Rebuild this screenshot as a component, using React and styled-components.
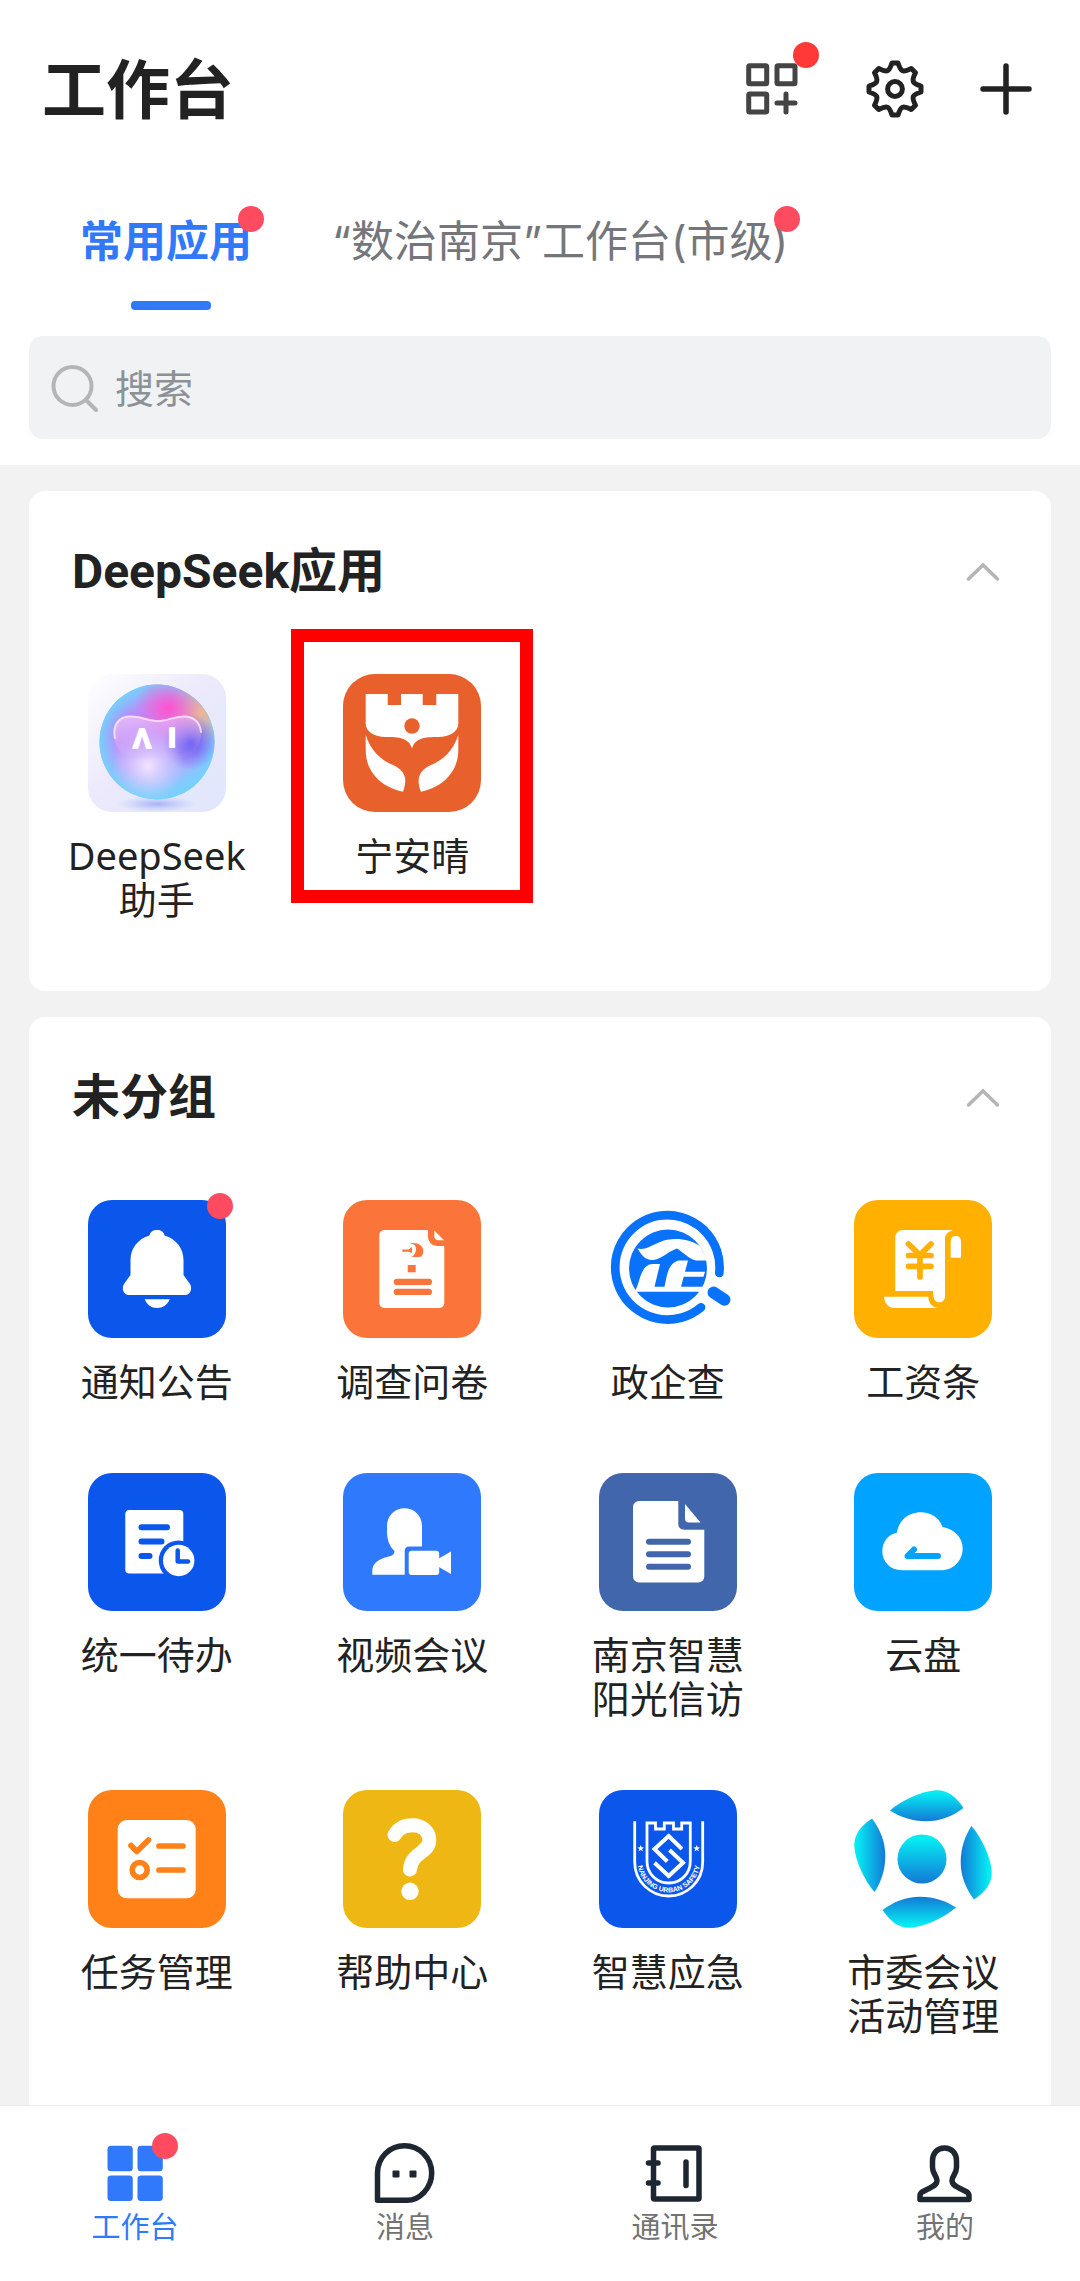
import React from 'react'
import styled, { createGlobalStyle, css } from 'styled-components';


const BellIcon = () => (
  <svg viewBox="0 0 138 138" fill="#fff" aria-hidden="true">
    <path d="M69 30C73 30 76 32 76.500 35.500C88 39 95.500 48 95.500 60V75L102 84C104.500 88 103 95 97 95H41C35 95 33.500 88 36 84L42.500 75V60C42.500 48 50 39 61.500 35.500C62 32 65 30 69 30Z" />
    <path d="M56.700 99.300H81.700C79.500 105 74.500 108 69 108S59 105 56.700 99.300Z" />
  </svg>
);

const SurveyIcon = () => (
  <svg viewBox="0 0 138 138" fill="#fff" aria-hidden="true">
    <path d="M41 30H85V36C85 42 89 46 95 46H101.300V103A5 5 0 0 1 96.300 108H41.300A5 5 0 0 1 36.300 103V35A5 5 0 0 1 41 30Z" />
    <path d="M91.300 30.500L101 40.300H95.500C92.500 40.300 91.300 38.500 91.300 36Z" />
    <g fill="#fb753a">
      <path d="M66 43.500C74 41.500 80.300 45.500 80.300 51C80.300 53.500 79 57 76.500 57H68.500C73 54.500 74.500 48 71.500 45C70 44 68 43.700 66 43.500Z" />
      <path d="M59.300 49.500H65.500L69 47V53L66 51.700H59.300Z" />
      <rect x="64.700" y="65" width="8" height="7.300" />
      <rect x="50.700" y="78.700" width="38.300" height="6.300" rx="3.100" />
      <rect x="50.700" y="88.700" width="38.300" height="6.300" rx="3.100" />
    </g>
  </svg>
);

const CompanyIcon = () => (
  <svg viewBox="0 0 138 138" fill="none" aria-hidden="true">
    <path d="M120.300 73A52.200 52.200 0 1 0 102 107.300" stroke="#0872fb" strokeWidth="8.700" strokeLinecap="round" />
    <path d="M114.500 92.500L125.500 99.700" stroke="#0872fb" strokeWidth="12" strokeLinecap="round" />
    <circle cx="69" cy="68.500" r="39" fill="#0872fb" />
    <g fill="#fff">
      <path d="M38.500 48.500C47 51 56 42.500 68 39.700C80 37.500 92 40 101 46L109 60.500H97C90 59 84 52 78 48.500C70 51 62 59.500 54 60C47 60.500 43 56 38.500 48.500Z" />
      <path d="M36 91C41 84 41 64 54 64H61L55.500 86.700H65.500C68 78 68 63 80 60.500H89L86 71.700H106L104.500 76.700H84.700L82 86.700H104L101 91.700H36Z" />
    </g>
  </svg>
);

const SalaryIcon = () => (
  <svg viewBox="0 0 138 138" fill="#fff" aria-hidden="true">
    <path d="M49.500 30H99C94 31.500 91 34.500 91 39V96C91 100 88.700 102.300 85.500 102.300C82 102.300 80 100 79.500 96L79 91H41.300V38C41.300 33 44.500 30 49.500 30Z" />
    <path d="M96.700 57.700V41.500C96.700 38 98.500 36 101.800 36S107 38 107 41.500V57.700Z" />
    <path d="M30 96.700H74.300C74.500 102 77 106.500 83.500 108H40C34 107.500 30.500 103 30 96.700Z" />
    <g fill="none" stroke="#ffb000" strokeWidth="5.700" strokeLinecap="round" strokeLinejoin="round">
      <path d="M54.500 44L66 55L77 44" />
      <path d="M54.500 55.500H77M54.500 66.300H77M66 55V77" />
    </g>
  </svg>
);

const TodoIcon = () => (
  <svg viewBox="0 0 138 138" fill="#fff" aria-hidden="true">
    <rect x="37.300" y="37" width="58" height="63.500" rx="4" />
    <g stroke="#0b57ec" strokeWidth="6" strokeLinecap="round" fill="none">
      <path d="M53.500 54.300H79M53.500 68.500H73.500M53.500 83H61.500" />
    </g>
    <circle cx="90.700" cy="87.500" r="20" fill="#0b57ec" />
    <circle cx="90.700" cy="87.500" r="15.700" />
    <path d="M89.700 77.500V88.500H100" fill="none" stroke="#0b57ec" strokeWidth="4.500" strokeLinecap="round" strokeLinejoin="round" />
  </svg>
);

const MeetingIcon = () => (
  <svg viewBox="0 0 138 138" fill="#fff" aria-hidden="true">
    <path d="M61.500 35.300C71 35.300 79 42.500 79 53V73.500H66C63.500 73.500 61.700 75 61.700 78V101.700H29.300V98C29.300 90 36 86 44 84C48 83 51.500 82 51.500 78C46 73 44 66 44 58V53C44 42.500 52 35.300 61.500 35.300Z" />
    <rect x="65.700" y="77.700" width="30.500" height="24.300" rx="3" />
    <path d="M95 86L108 78.500V101L95 93.500Z" />
  </svg>
);

const DocIcon = () => (
  <svg viewBox="0 0 138 138" fill="#fff" aria-hidden="true">
    <path d="M40 28H79.300V50.500C79.300 54.500 81.500 56.700 85.500 56.700H105.300V103.500A6 6 0 0 1 99.300 109.500H40A6 6 0 0 1 34 103.500V34A6 6 0 0 1 40 28Z" />
    <path d="M86 31L101.500 49.500H90Q86 49.500 86 45.500Z" />
    <path d="M50 68.700H89M50 81.300H89M50 93.800H89" stroke="#4166ab" strokeWidth="6" strokeLinecap="round" />
  </svg>
);

const CloudIcon = () => (
  <svg viewBox="0 0 138 138" fill="#fff" aria-hidden="true">
    <path d="M48 97.300C36 97.300 28.300 88.500 28.300 78.300C28.300 68 35 61 43 59.700C44.500 48 54 39.300 66.700 39.300C77 39.300 85.500 45 88.500 54C100 56 108.700 64 108.700 75.500C108.700 88 99 97.300 87 97.300Z" />
    <path d="M84 83H53.500L60 76.500" fill="none" stroke="#00a3ff" strokeWidth="6" strokeLinecap="round" strokeLinejoin="round" />
  </svg>
);

const TaskIcon = () => (
  <svg viewBox="0 0 138 138" fill="none" aria-hidden="true">
    <rect x="29.700" y="30" width="78" height="78.300" rx="9" fill="#fff" />
    <g stroke="#ff8118" strokeWidth="5.700" strokeLinecap="round" strokeLinejoin="round">
      <path d="M43 55.500L48.700 61.500L60.500 50" />
      <path d="M71 56H95M71 80H95" />
      <circle cx="51.700" cy="80" r="7.500" />
    </g>
  </svg>
);

const HelpIcon = () => (
  <svg viewBox="0 0 138 138" fill="none" aria-hidden="true">
    <path d="M51.500 45C55.500 38 62 35.300 69.500 35.300C79 35.300 86.300 41 86.300 50C86.300 63 68.500 62 67 79.500" stroke="#fff" strokeWidth="14" strokeLinecap="round" />
    <circle cx="67" cy="101.300" r="8.700" fill="#fff" />
  </svg>
);

const STAR = 'M0 -3.500L.9 -1.200L3.300 -1.100L1.400 .4L2.100 2.800L0 1.500L-2.100 2.800L-1.400 .4L-3.300 -1.100L-.9 -1.200Z';

const SafetyIcon = () => (
  <svg viewBox="0 0 138 138" fill="none" stroke="#fff" aria-hidden="true">
    <path d="M35.700 31.300V72C35.700 91 51 106 69.700 106S103.700 91 103.700 72V31.300" strokeWidth="2.800" />
    <path d="M48 33H56.500V39H65.300V33H74.500V39H82.700V33H91.300V71.500C91.300 83.500 82 93 69.700 93S48 83.500 48 71.500Z" strokeWidth="2.800" />
    <path d="M83 59L69.700 46L55.500 59L68.300 71.500M70.500 60L84 72.700L69.700 86L55.500 72.700" strokeWidth="4" />
    <g fill="#fff" stroke="none">
      <path d={STAR} transform="translate(41.700 58.500)" />
      <path d={STAR} transform="translate(97.700 58.500)" />
      <path id="badge-arc" d="M38.500 64V71.500C38.500 88.500 52.500 102.300 69.700 102.300S101 88.500 101 71.500V64" fill="none" />
      <text fontSize="7" fontWeight="700" fontFamily="'Liberation Sans', sans-serif">
        <textPath href="#badge-arc" startOffset="50%" textAnchor="middle">NANJING URBAN SAFETY</textPath>
      </text>
    </g>
  </svg>
);

const PETAL = 'M36 20.500C48 10 68 1 82 .3C94 0 102 7 109.500 18C98 26.500 86 31.300 72 31.300C58 31.300 46 27 36 20.500Z';

const PetalIcon = () => (
  <svg viewBox="0 0 138 138" aria-hidden="true">
    <defs>
      <linearGradient id="petal" x1="0" y1="0" x2="0" y2="1">
        <stop offset="0.100" stopColor="#05eaf3" />
        <stop offset="1" stopColor="#1479d6" />
      </linearGradient>
    </defs>
    <g fill="url(#petal)">
      {[0, 90, 180, 270].map((angle) => (
        <path key={angle} d={PETAL} transform={`rotate(${angle} 69 69)`} />
      ))}
      <circle cx="68" cy="69" r="24.500" />
    </g>
  </svg>
);

const RobotIcon = () => (
  <svg viewBox="0 0 138 138" aria-hidden="true">
    <defs>
      <linearGradient id="robot-back" x1="0" y1="0" x2="1" y2="1">
        <stop offset="0" stopColor="#fff" />
        <stop offset="0.450" stopColor="#eceafb" />
        <stop offset="1" stopColor="#dfe6fc" />
      </linearGradient>
      <linearGradient id="robot-ball" x1="0.250" y1="0" x2="0.500" y2="1">
        <stop offset="0" stopColor="#9fb2fb" />
        <stop offset="0.300" stopColor="#b58bfa" />
        <stop offset="0.650" stopColor="#b9a4fb" />
        <stop offset="1" stopColor="#7fd6fd" />
      </linearGradient>
      <radialGradient id="robot-edge">
        <stop offset="0.680" stopColor="#76c8fd" stopOpacity="0" />
        <stop offset="1" stopColor="#74d2fd" />
      </radialGradient>
      <radialGradient id="robot-pink">
        <stop offset="0" stopColor="#ff52cf" />
        <stop offset="1" stopColor="#ff62d0" stopOpacity="0" />
      </radialGradient>
      <radialGradient id="robot-gold">
        <stop offset="0" stopColor="#f2b58f" />
        <stop offset="1" stopColor="#f2b58f" stopOpacity="0" />
      </radialGradient>
      <radialGradient id="robot-violet">
        <stop offset="0" stopColor="#5a4ef0" />
        <stop offset="1" stopColor="#6a55f0" stopOpacity="0" />
      </radialGradient>
      <radialGradient id="robot-glow">
        <stop offset="0" stopColor="#f3e4ff" />
        <stop offset="1" stopColor="#e0ccff" stopOpacity="0" />
      </radialGradient>
      <radialGradient id="robot-shade">
        <stop offset="0" stopColor="#a9b0f8" />
        <stop offset="1" stopColor="#b9c4fa" stopOpacity="0" />
      </radialGradient>
      <linearGradient id="robot-visor" x1="0" y1="0" x2="0.500" y2="1">
        <stop offset="0" stopColor="#f0c4fa" stopOpacity="0.850" />
        <stop offset="0.600" stopColor="#dcaaf6" stopOpacity="0.500" />
        <stop offset="1" stopColor="#c9b0fa" stopOpacity="0.100" />
      </linearGradient>
      <clipPath id="robot-clip">
        <circle cx="69" cy="68" r="57.500" />
      </clipPath>
    </defs>
    <rect width="138" height="138" rx="24" fill="url(#robot-back)" />
    <ellipse cx="69" cy="130" rx="40" ry="8" fill="url(#robot-shade)" />
    <g clipPath="url(#robot-clip)">
      <rect x="10" y="10" width="118" height="118" fill="url(#robot-ball)" />
      <circle cx="69" cy="68" r="58" fill="url(#robot-edge)" />
      <circle cx="112" cy="38" r="34" fill="url(#robot-gold)" />
      <circle cx="80" cy="34" r="34" fill="url(#robot-pink)" />
      <circle cx="102" cy="68" r="28" fill="url(#robot-violet)" />
      <circle cx="60" cy="92" r="36" fill="url(#robot-glow)" />
    </g>
    <path d="M41 42.500C54 42 60 47 70 47S86 42 98 42.500C108 43.500 113 50 113 59C113 75 103 84 90 84H48C34 83 26 74 26 60C26 50 31 43 41 42.500Z" fill="url(#robot-visor)" />
    <path d="M27 64C24 51 31 43 41 42.500C54 42 60 47 70 47S86 42 98 42.500C106 43.500 112 48 113 58" fill="none" stroke="#ffe3fb" strokeWidth="2" strokeLinecap="round" opacity="0.850" />
    <g fill="#fff" stroke="#fff" strokeWidth="2" strokeLinejoin="round" fontFamily="'Liberation Sans', sans-serif" fontWeight="700" fontSize="27" textAnchor="middle">
      <text x="54" y="74">Λ</text>
      <text x="84" y="73">I</text>
    </g>
  </svg>
);

const SunnyIcon = () => (
  <svg viewBox="0 0 138 138" fill="#fff" aria-hidden="true">
    <path d="M22.700 20H44.700V31H58V20H79.700V31H93.300V20H115.300V50C115.300 57 107 63 95 63C82 63 72 64 69 74.500C66 64 56 63 43 63C31 63 22.700 57 22.700 50Z" />
    <circle cx="69" cy="52" r="7.700" fill="#e8602c" />
    <path d="M22.700 61C28 77 38 86 50 91C61 96 65.500 104 60 117.700C38 113 22.700 98 22.700 76Z" />
    <path d="M115.300 61C110 77 100 86 88 91C77 96 72.500 104 78 117.700C100 113 115.300 98 115.300 76Z" />
  </svg>
);

const AddAppIcon = () => (
  <svg width="52" height="52" viewBox="0 0 52 52" fill="none" stroke="#444" strokeWidth="5" strokeLinecap="round" aria-hidden="true">
    <rect x="2.700" y="2.700" width="18" height="18" rx="1" />
    <rect x="31" y="2.700" width="18" height="18" rx="1" />
    <rect x="2.700" y="31" width="18" height="18" rx="1" />
    <path d="M40 31V49M31 40H49" />
  </svg>
);

const gearPath = () => {
  const turn = (x, y, step) => {
    const a = (step * Math.PI) / 4;
    return `${(x * Math.cos(a) - y * Math.sin(a)).toFixed(2)} ${(x * Math.sin(a) + y * Math.cos(a)).toFixed(2)}`;
  };
  let d = `M${turn(-3, -26, 0)}`;
  for (let i = 0; i < 8; i += 1) {
    d += `L${turn(3, -26, i)}C${turn(6, -17, i)} ${turn(-6, -17, i + 1)} ${turn(-3, -26, i + 1)}`;
  }
  return `${d}Z`;
};

const GearIcon = () => (
  <svg width="58" height="58" viewBox="-29 -29 58 58" fill="none" stroke="#222" strokeWidth="5" strokeLinejoin="round" aria-hidden="true">
    <path d={gearPath()} />
    <circle r="7.400" />
  </svg>
);

const PlusIcon = () => (
  <svg width="52" height="52" viewBox="0 0 52 52" stroke="#222" strokeWidth="5.500" strokeLinecap="round" aria-hidden="true">
    <path d="M26 3V49M3 26H49" />
  </svg>
);

const SearchIcon = () => (
  <svg width="48" height="48" viewBox="0 0 48 48" fill="none" stroke="#b4b5b7" strokeWidth="4" strokeLinecap="round" aria-hidden="true">
    <circle cx="21.500" cy="22" r="19" />
    <path d="M35.500 36.500L45 46" />
  </svg>
);

const ChevronUp = () => (
  <svg width="34" height="20" viewBox="0 0 34 20" fill="none" stroke="#b5b5b5" strokeWidth="3.500" strokeLinecap="round" aria-hidden="true">
    <path d="M2.500 17L17 3L31.500 17" />
  </svg>
);

const WorkbenchIcon = () => (
  <svg width="64" height="64" viewBox="0 0 64 64" fill="#3079fb" aria-hidden="true">
    <rect x="4.500" y="3.700" width="25.300" height="25.500" rx="3.500" />
    <rect x="34.500" y="3.700" width="25.300" height="25.500" rx="3.500" />
    <rect x="4.500" y="33.500" width="25.300" height="25.500" rx="3.500" />
    <rect x="34.500" y="33.500" width="25.300" height="25.500" rx="3.500" />
  </svg>
);

const ChatIcon = () => (
  <svg width="64" height="64" viewBox="0 0 64 64" fill="none" stroke="#1d2631" strokeWidth="5.500" strokeLinejoin="round" aria-hidden="true">
    <path d="M4.500 58.300V31C4.500 15.500 16.500 3.800 31.500 3.800S58.700 16 58.700 31S46.500 58.300 34 58.300Z" />
    <g fill="#1d2631" stroke="none">
      <rect x="19.500" y="28.500" width="7" height="7" rx="1" />
      <rect x="36.500" y="28.500" width="7" height="7" rx="1" />
    </g>
  </svg>
);

const ContactsIcon = () => (
  <svg width="64" height="64" viewBox="0 0 64 64" fill="none" stroke="#1d2631" strokeWidth="5.500" strokeLinejoin="round" strokeLinecap="round" aria-hidden="true">
    <rect x="10.500" y="6" width="45.500" height="51" rx="1" />
    <path d="M5.500 21H15M5.500 41H15" />
    <path d="M43 20V43.500" />
  </svg>
);

const PersonIcon = () => (
  <svg width="64" height="64" viewBox="0 0 64 64" fill="none" stroke="#1d2631" strokeWidth="5.500" strokeLinejoin="round" aria-hidden="true">
    <path d="M31.500 6C24 6 19.500 11.500 19.500 19V25.500C19.500 32 24 34 24 38.500C24 42.500 20.500 44 17 46L9 50C7.500 51 7 52.500 7 54V57.500H56V54C56 52.500 55.500 51 54 50L46 46C42.500 44 39 42.500 39 38.500C39 34 43.500 32 43.500 25.500V19C43.500 11.500 39 6 31.500 6Z" />
  </svg>
);

const deepSeekApps = [
  { name: 'DeepSeek助手', icon: RobotIcon },
  { name: '宁安晴', icon: SunnyIcon, color: '#e8602c', round: true, marked: true },
];

const otherApps = [
  { name: '通知公告', icon: BellIcon, color: '#0b57ec', unread: true },
  { name: '调查问卷', icon: SurveyIcon, color: '#fb753a' },
  { name: '政企查', icon: CompanyIcon },
  { name: '工资条', icon: SalaryIcon, color: '#ffb000' },
  { name: '统一待办', icon: TodoIcon, color: '#0b57ec' },
  { name: '视频会议', icon: MeetingIcon, color: '#2f79fc' },
  { name: '南京智慧阳光信访', icon: DocIcon, color: '#4166ab' },
  { name: '云盘', icon: CloudIcon, color: '#00a3ff' },
  { name: '任务管理', icon: TaskIcon, color: '#ff8118' },
  { name: '帮助中心', icon: HelpIcon, color: '#efb714' },
  { name: '智慧应急', icon: SafetyIcon, color: '#0b57ec' },
  { name: '市委会议活动管理', icon: PetalIcon },
];

const navItems = [
  { name: '工作台', icon: WorkbenchIcon, active: true, unread: true },
  { name: '消息', icon: ChatIcon },
  { name: '通讯录', icon: ContactsIcon },
  { name: '我的', icon: PersonIcon },
];

const AppGroup = ({ title, apps }) => (
  <Card>
    <CardHeader>
      <h2>{title}</h2>
      <IconButton type="button" aria-label={`收起${title}`}>
        <ChevronUp/>
      </IconButton>
    </CardHeader>

    <AppGrid>
      {apps.map(({ name, icon: Icon, color, round, unread, marked }) => (
        <AppItem key={name}>
          <AppLink href="#" $marked={marked}>
            <AppIcon $color={color} $round={round}>
              <Icon/>
              {unread && <Dot $place="app"/>}
            </AppIcon>
            <AppName>{name}</AppName>
          </AppLink>
        </AppItem>
      ))}
    </AppGrid>
  </Card>
);

const App = () => {
  return (
    <>
      <GlobalStyle/>
      <Screen>
        <Header>
          <TitleBar>
            <h1>工作台</h1>
            <Actions>
              <IconButton type="button" aria-label="添加应用">
                <AddAppIcon/>
                <Dot $place="action"/>
              </IconButton>
              <IconButton type="button" aria-label="设置">
                <GearIcon/>
              </IconButton>
              <IconButton type="button" aria-label="新建">
                <PlusIcon/>
              </IconButton>
            </Actions>
          </TitleBar>

          <Tabs role="tablist">
            <Tab type="button" role="tab" aria-selected="true" $active>
              常用应用
              <Dot $place="tab"/>
            </Tab>
            <Tab type="button" role="tab" aria-selected="false">
              “数治南京”工作台(市级)
              <Dot $place="tab"/>
            </Tab>
          </Tabs>

          <SearchBox>
            <SearchIcon/>
            <input type="text" placeholder="搜索" aria-label="搜索" />
          </SearchBox>
        </Header>

        <Content>
          <AppGroup title="DeepSeek应用" apps={deepSeekApps} />
          <AppGroup title="未分组" apps={otherApps} />
        </Content>

        <BottomNav>
          {navItems.map(({ name, icon: Icon, active, unread }) => (
            <NavLink key={name} href="#" $active={active}>
              <NavIcon>
                <Icon/>
                {unread && <Dot $place="nav"/>}
              </NavIcon>
              {name}
            </NavLink>
          ))}
        </BottomNav>
      </Screen>
    </>
  );
};

export default App;

const GlobalStyle = createGlobalStyle`
  *, *::before, *::after{
    box-sizing: border-box;
  }

  body{
    margin: 0;

    font-family: 'Noto Sans', 'Noto Sans CJK SC', sans-serif;
    color: #222;
    background-color: #fff;
  }

  h1, h2, ul{
    margin: 0;
    padding: 0;
  }

  button, input{
    font-family: inherit;
  }

  svg{
    display: block;
  }
`
const Screen = styled.div`
  height: 100vh;

  display: flex;
  flex-direction: column;
`
const Header = styled.header`
  flex: none;

  background-color: #fff;
`
const TitleBar = styled.div`
  height: 178px;
  padding: 0 48px 0 42px;

  display: flex;
  justify-content: space-between;
  align-items: center;

  h1{
    font-size: 64px;
    font-weight: 700;
    line-height: 80px;
  }
`
const IconButton = styled.button`
  padding: 0;

  position: relative;

  border: none;
  background: none;
`
const Actions = styled.div`
  display: flex;
  align-items: center;
  gap: 56px;

  ${IconButton}:first-child{
    margin-right: 12px;
  }
`
const dotPlaces = {
  action: css`
    top: -21px;
    right: -21px;
  `,
  tab: css`
    top: -4px;
    right: -12px;
  `,
  app: css`
    top: -7px;
    right: -7px;
  `,
  nav: css`
    top: -9px;
    right: -11px;
  `,
};
const Dot = styled.span`
  width: 26px;
  height: 26px;

  position: absolute;
  ${({ $place }) => dotPlaces[$place]}

  border-radius: 50%;
  background-color: ${({ $place }) => ($place === 'action' ? '#ff3838' : '#ff4b60')};
`
const Tabs = styled.div`
  padding: 32px 80px 0;

  display: flex;
  gap: 80px;
`
const Tab = styled.button`
  padding: 0;

  position: relative;

  font-family: Inter, 'Noto Sans CJK SC', sans-serif;
  font-size: 43px;
  font-weight: ${({ $active }) => ($active ? 700 : 400)};
  line-height: 62px;
  text-align: left;
  white-space: nowrap;
  color: ${({ $active }) => ($active ? '#3079fb' : '#74767b')};

  border: none;
  background: none;

  &::after{
    content: '';
    display: block;

    width: 80px;
    height: 9px;
    margin: 29px 0 0 51px;

    border-radius: 4px;
    background-color: ${({ $active }) => ($active ? '#3079fb' : 'transparent')};
  }
`
const SearchBox = styled.div`
  height: 103px;
  margin: 26px 29px;
  padding: 0 22px;

  display: flex;
  align-items: center;
  gap: 16px;

  border-radius: 14px;
  background-color: #f1f2f4;

  input{
    flex: 1;
    min-width: 0;
    padding: 0;

    font-size: 39px;
    line-height: 56px;
    color: #222;

    border: none;
    outline: none;
    background: none;
  }

  input::placeholder{
    color: #8c9097;
    opacity: 1;
  }
`
const Content = styled.main`
  flex: 1;
  min-height: 0;
  padding: 26px 29px 0;

  display: flex;
  flex-direction: column;
  gap: 26px;

  overflow-y: auto;
  scrollbar-width: none;

  background-color: #f2f2f3;
`
const Card = styled.section`
  flex: none;

  border-radius: 16px;
  background-color: #fff;

  &:last-child{
    padding-bottom: 24px;
  }
`
const CardHeader = styled.div`
  height: 162px;
  margin-bottom: 21px;
  padding: 0 51px 0 43px;

  display: flex;
  justify-content: space-between;
  align-items: center;

  h2{
    font-family: Roboto, 'Noto Sans CJK SC', sans-serif;
    font-size: 48px;
    font-weight: 700;
    line-height: 64px;
  }
`
const AppGrid = styled.ul`
  display: grid;
  grid-template-columns: repeat(4, 1fr);

  list-style: none;
`
const AppItem = styled.li`
  padding-bottom: 70px;

  display: flex;
  justify-content: center;
`
const AppLink = styled.a`
  position: relative;

  display: flex;
  flex-direction: column;
  align-items: center;
  gap: 21px;

  color: inherit;
  text-decoration: none;

  ${({ $marked }) => $marked && css`
    &::before{
      content: '';

      width: 242px;
      height: 274px;

      position: absolute;
      top: -45px;
      left: 50%;
      transform: translateX(-50%);

      border: 13px solid #ff0000;
    }
  `}
`
const AppIcon = styled.span`
  width: 138px;
  height: 138px;

  position: relative;

  border-radius: ${({ $round }) => ($round ? '32px' : '24px')};
  background-color: ${({ $color }) => $color || 'transparent'};
`
const AppName = styled.span`
  max-width: 184px;

  font-size: 38px;
  line-height: 44px;
  text-align: center;
`
const BottomNav = styled.nav`
  flex: none;
  height: 176px;

  display: grid;
  grid-template-columns: repeat(4, 1fr);

  border-top: 1px solid #ececec;
  background-color: #fff;
`
const NavLink = styled.a`
  padding-top: 36px;

  display: flex;
  flex-direction: column;
  align-items: center;

  font-size: 29px;
  line-height: 42px;
  text-decoration: none;
  color: ${({ $active }) => ($active ? '#3079fb' : '#737373')};
`
const NavIcon = styled.span`
  position: relative;
`
